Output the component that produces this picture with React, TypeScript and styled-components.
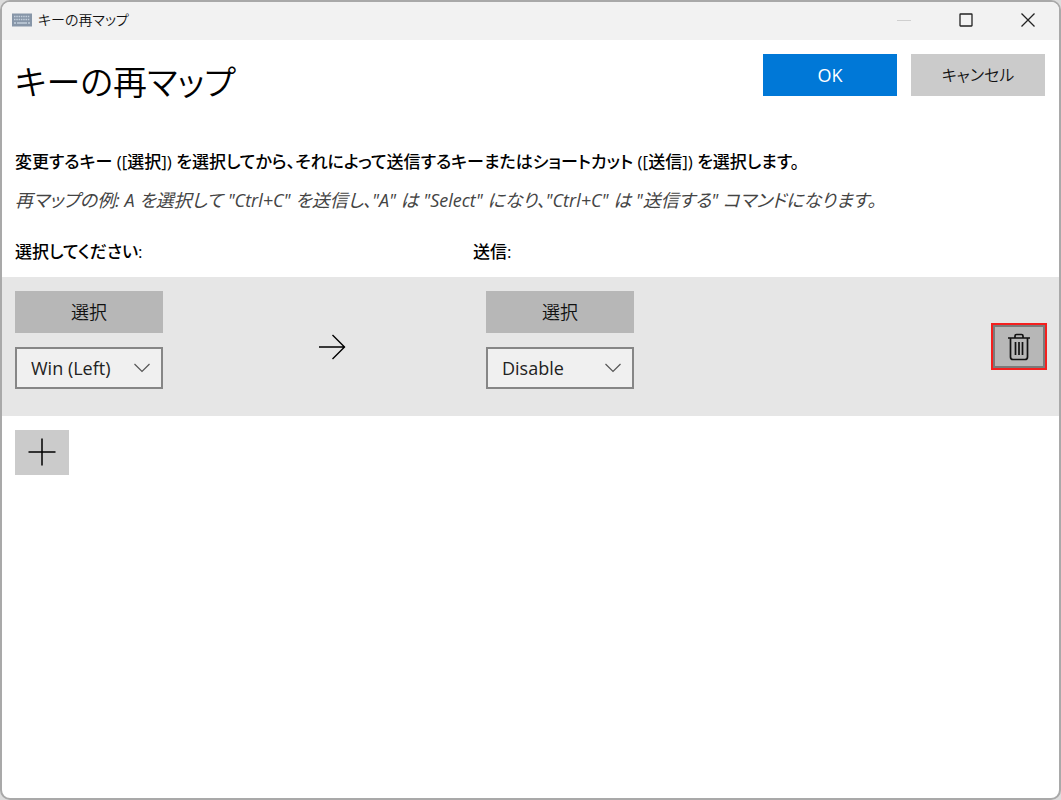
import React from "react";
import styled, { createGlobalStyle } from "styled-components";

const GlobalStyle = createGlobalStyle`
  *, *::before, *::after { box-sizing: border-box; }
  body {
    margin: 0;
    background: #dcdcdc;
    color: #000;
    font-family: "Open Sans", "Noto Sans CJK JP", sans-serif;
    font-size: 18px;
    line-height: 24px;
    font-feature-settings: "palt";
  }
  button, select { font: inherit; font-feature-settings: inherit; color: inherit; border-radius: 0; margin: 0; }
  h1, h2, p { margin: 0; }
  svg { display: block; }
`;

const Desktop = styled.div`
  min-height: 100vh;
  display: flex;
`;

const Window = styled.div`
  flex: 1;
  min-width: 0;
  display: flex;
  flex-direction: column;
  background: #fff;
  border: 2px solid #a9a9a9;
  border-radius: 10px;
  overflow: hidden;
`;

const TitleBar = styled.header`
  display: flex;
  align-items: center;
  height: 38px;
  padding: 0 0 2px 10px;
  background: #f2f2f2;
`;

const WindowTitle = styled.span`
  flex: 1;
  margin-left: 6px;
  font-size: 14px;
  font-weight: 350;
  color: #111;
`;

const CaptionButton = styled.button`
  width: 62px;
  height: 36px;
  padding: 0;
  border: 0;
  background: transparent;
  display: grid;
  place-items: center;
`;

const Top = styled.div`
  display: flex;
  align-items: flex-start;
  justify-content: space-between;
  padding: 14px 14px 0 13px;
`;

const Heading = styled.h1`
  font-size: 34px;
  line-height: 56px;
  font-weight: 350;
`;

const Actions = styled.div`
  display: flex;
  gap: 14px;
`;

const Button = styled.button<{ $tone?: "primary" | "dark" }>`
  width: ${(p) => (p.$tone === "dark" ? "148px" : "134px")};
  height: 42px;
  padding: 0;
  border: 0;
  font-size: ${(p) => (p.$tone ? "18px" : "16px")};
  font-weight: ${(p) => (p.$tone === "primary" ? 400 : 350)};
  background: ${(p) => (p.$tone === "primary" ? "#0078d7" : p.$tone === "dark" ? "#b7b7b7" : "#cbcbcb")};
  color: ${(p) => (p.$tone === "primary" ? "#fff" : "#111")};
`;

const Intro = styled.div`
  padding: 40px 13px 0;
`;

const Lead = styled.p`
  font-size: 17px;
  font-weight: 500;
`;

const Example = styled.p`
  margin-top: 14px;
  font-weight: 400;
  font-style: italic;
  color: #444;
`;

const Columns = styled.div`
  display: grid;
  grid-template-columns: 458px 1fr;
  padding: 28px 13px 13px;
`;

const ColumnTitle = styled.h2`
  font-size: 17px;
  font-weight: 500;
`;

const MappingRow = styled.div`
  display: grid;
  grid-template-columns: 303px 168px 1fr auto;
  align-items: center;
  padding: 0 12px 0 13px;
  background: #e6e6e6;
`;

const KeyPicker = styled.div`
  display: grid;
  gap: 14px;
  justify-items: start;
  padding: 14px 0 27px;
`;

const SelectBox = styled.div`
  position: relative;
  width: 148px;
  color: #555;
  svg {
    position: absolute;
    right: 13px;
    top: 16px;
    pointer-events: none;
  }
`;

const Select = styled.select`
  display: block;
  appearance: none;
  width: 100%;
  height: 42px;
  padding: 0 32px 0 14px;
  border: 2px solid #868686;
  background: #f0f0f0;
  color: #222;
`;

const DeleteButton = styled.button`
  width: 56px;
  height: 47px;
  padding: 0;
  display: grid;
  place-items: center;
  border: 2px solid #f4201f;
  background: #b7b7b7;
  box-shadow: inset 0 0 0 2px #7a7a7a;
`;

const AddButton = styled.button`
  width: 54px;
  height: 45px;
  margin: 14px 13px;
  padding: 0 0 2px;
  display: grid;
  place-items: center;
  border: 0;
  background: #cbcbcb;
`;

const KeyboardIcon = () => (
  <svg width="20" height="14" viewBox="0 0 20 14" aria-hidden="true">
    <rect width="20" height="13" y="0.5" fill="#8796a8" />
    <path d="M2 3.5h16M2 6.5h16" stroke="#c3cfdc" strokeWidth="1.5" strokeDasharray="1.5 0.8" />
    <path d="M2 10h2M5 10h10M16 10h2" stroke="#c3cfdc" strokeWidth="1.5" />
  </svg>
);

const Chevron = () => (
  <svg width="16" height="10" viewBox="0 0 16 10" fill="none" stroke="currentColor" strokeWidth="1.2" aria-hidden="true">
    <path d="M.5 1 8 8.5 15.5 1" />
  </svg>
);

const ArrowIcon = () => (
  <svg width="28" height="26" viewBox="0 0 28 26" fill="none" stroke="#000" strokeWidth="1.4" aria-hidden="true">
    <path d="M1 13h26M14.5 1 26.5 13l-12 12" />
  </svg>
);

const TrashIcon = () => (
  <svg width="24" height="28" viewBox="0 0 24 28" fill="none" stroke="#111" strokeWidth="1.7" aria-hidden="true">
    <path d="M1 5h22M8 5V3q0-1.5 1.5-1.5h5Q16 1.500 16 3v2M3.500 5v19q0 2.500 2.500 2.500h12q2.500 0 2.500-2.500V5M8.500 9v13M12 9v13M15.500 9v13" />
  </svg>
);

interface KeySelectProps {
  label: string;
  value: string;
}

const KeySelect = ({ label, value }: KeySelectProps) => (
  <KeyPicker>
    <Button type="button" $tone="dark">選択</Button>
    <SelectBox>
      <Select aria-label={label} defaultValue={value}>
        <option>{value}</option>
      </Select>
      <Chevron />
    </SelectBox>
  </KeyPicker>
);

export default function App() {
  return (
    <Desktop>
      <GlobalStyle />
      <Window>
        <TitleBar>
          <KeyboardIcon />
          <WindowTitle>キーの再マップ</WindowTitle>
          <CaptionButton type="button" aria-label="最小化" disabled>
            <svg width="14" height="14" viewBox="0 0 14 14" stroke="#cfcfcf"><path d="M0 7.500h14" /></svg>
          </CaptionButton>
          <CaptionButton type="button" aria-label="最大化">
            <svg width="14" height="14" viewBox="0 0 14 14" fill="none" stroke="#222" strokeWidth="1.3">
              <rect x="1" y="1" width="12" height="12" rx="0.5" />
            </svg>
          </CaptionButton>
          <CaptionButton type="button" aria-label="閉じる">
            <svg width="14" height="14" viewBox="0 0 14 14" stroke="#222" strokeWidth="1.3"><path d="M.5.5l13 13M13.500.5l-13 13" /></svg>
          </CaptionButton>
        </TitleBar>
        <main>
          <Top>
            <Heading>キーの再マップ</Heading>
            <Actions>
              <Button type="button" $tone="primary">OK</Button>
              <Button type="button">キャンセル</Button>
            </Actions>
          </Top>
          <Intro>
            <Lead>変更するキー ([選択]) を選択してから、それによって送信するキーまたはショートカット ([送信]) を選択します。</Lead>
            <Example>再マップの例: A を選択して "Ctrl+C" を送信し、"A" は "Select" になり、"Ctrl+C" は "送信する" コマンドになります。</Example>
          </Intro>
          <Columns>
            <ColumnTitle>選択してください:</ColumnTitle>
            <ColumnTitle>送信:</ColumnTitle>
          </Columns>
          <MappingRow>
            <KeySelect label="選択してください" value="Win (Left)" />
            <ArrowIcon />
            <KeySelect label="送信" value="Disable" />
            <DeleteButton type="button" aria-label="削除"><TrashIcon /></DeleteButton>
          </MappingRow>
          <AddButton type="button" aria-label="追加">
            <svg width="28" height="28" viewBox="0 0 28 28" stroke="#000" strokeWidth="1.5"><path d="M14 .5v27M.5 14h27" /></svg>
          </AddButton>
        </main>
      </Window>
    </Desktop>
  );
}
